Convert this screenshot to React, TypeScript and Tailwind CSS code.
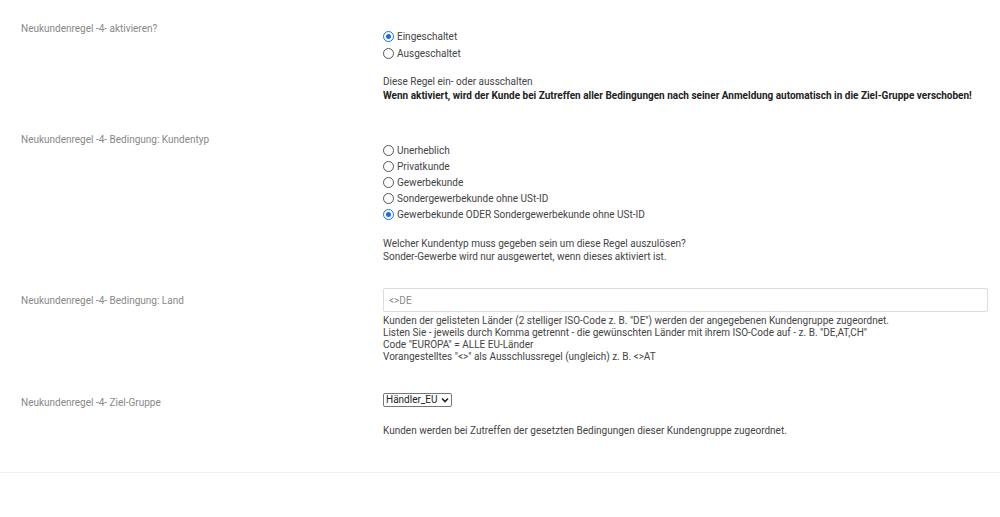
import React from "react";

const Radio = ({ checked, label }: { checked?: boolean; label: string }) => (
  <label className="flex items-center gap-[3px] h-full">
    {checked ? (
      <span className="flex w-[11px] h-[11px] items-center justify-center rounded-full border-[1.5px] border-[#1a6fe0] bg-white">
        <span className="w-[5px] h-[5px] rounded-full bg-[#1a6fe0]" />
      </span>
    ) : (
      <span className="w-[11px] h-[11px] rounded-full border border-[#555] bg-white" />
    )}
    <span>{label}</span>
  </label>
);

const Label = ({ children, className }: { children: React.ReactNode; className: string }) => (
  <div className={"w-[383px] shrink-0 pl-[21px] leading-[13px] text-[#888] " + className}>{children}</div>
);

export default function App() {
  return (
    <div
      className="min-h-[517px] bg-white text-[10px] text-[#444]"
      style={{ fontFamily: "Roboto, 'Liberation Sans', sans-serif" }}
    >
      {/* Aktivieren */}
      <div className="flex pt-[22px]">
        <Label className="">Neukundenregel -4- aktivieren?</Label>
        <div className="flex-1 mt-[6px]">
          <div className="h-[17px]"><Radio checked label="Eingeschaltet" /></div>
          <div className="h-[17px]"><Radio label="Ausgeschaltet" /></div>
          <div className="mt-[13px] leading-[14px]">
            <p>Diese Regel ein- oder ausschalten</p>
            <p className="font-bold text-[#222]">
              Wenn aktiviert, wird der Kunde bei Zutreffen aller Bedingungen nach seiner Anmeldung automatisch in die Ziel-Gruppe verschoben!
            </p>
          </div>
        </div>
      </div>

      {/* Kundentyp */}
      <div className="flex pt-[28px]">
        <Label className="mt-[2px]">Neukundenregel -4- Bedingung: Kundentyp</Label>
        <div className="flex-1 mt-[11px]">
          <div className="h-[16px]"><Radio label="Unerheblich" /></div>
          <div className="h-[16px]"><Radio label="Privatkunde" /></div>
          <div className="h-[16px]"><Radio label="Gewerbekunde" /></div>
          <div className="h-[16px]"><Radio label="Sondergewerbekunde ohne USt-ID" /></div>
          <div className="h-[16px]"><Radio checked label="Gewerbekunde ODER Sondergewerbekunde ohne USt-ID" /></div>
          <div className="mt-[15px] leading-[13px]">
            <p>Welcher Kundentyp muss gegeben sein um diese Regel auszulösen?</p>
            <p>Sonder-Gewerbe wird nur ausgewertet, wenn dieses aktiviert ist.</p>
          </div>
        </div>
      </div>

      {/* Land */}
      <div className="flex pt-[25px]">
        <Label className="mt-[6px]">Neukundenregel -4- Bedingung: Land</Label>
        <div className="flex-1 pr-[12px]">
          <div className="h-[24px] border border-[#dcdcdc] rounded-[2px] flex items-center pl-[5px] text-[#888]">
            &lt;&gt;DE
          </div>
          <div className="mt-[3px] leading-[12px]">
            <p>Kunden der gelisteten Länder (2 stelliger ISO-Code z. B. "DE") werden der angegebenen Kundengruppe zugeordnet.</p>
            <p>Listen Sie - jeweils durch Komma getrennt - die gewünschten Länder mit ihrem ISO-Code auf - z. B. "DE,AT,CH"</p>
            <p>Code "EUROPA" = ALLE EU-Länder</p>
            <p>Vorangestelltes "&lt;&gt;" als Ausschlussregel (ungleich) z. B. &lt;&gt;AT</p>
          </div>
        </div>
      </div>

      {/* Ziel-Gruppe */}
      <div className="flex pt-[29px]">
        <Label className="mt-[4px]">Neukundenregel -4- Ziel-Gruppe</Label>
        <div className="flex-1">
          <div className="inline-flex h-[14px] items-center gap-[3px] border border-[#767676] rounded-[2px] px-[2px] text-[#222]">
            <span>Händler_EU</span>
            <svg width="8" height="6" viewBox="0 0 8 6" fill="none">
              <path d="M1 1.5 L4 4.5 L7 1.5" stroke="#222" strokeWidth="1.6" />
            </svg>
          </div>
          <p className="mt-[17px] leading-[13px]">
            Kunden werden bei Zutreffen der gesetzten Bedingungen dieser Kundengruppe zugeordnet.
          </p>
        </div>
      </div>

      <div className="mt-[35px] border-t border-[#f0f0f0]" />
    </div>
  );
}
